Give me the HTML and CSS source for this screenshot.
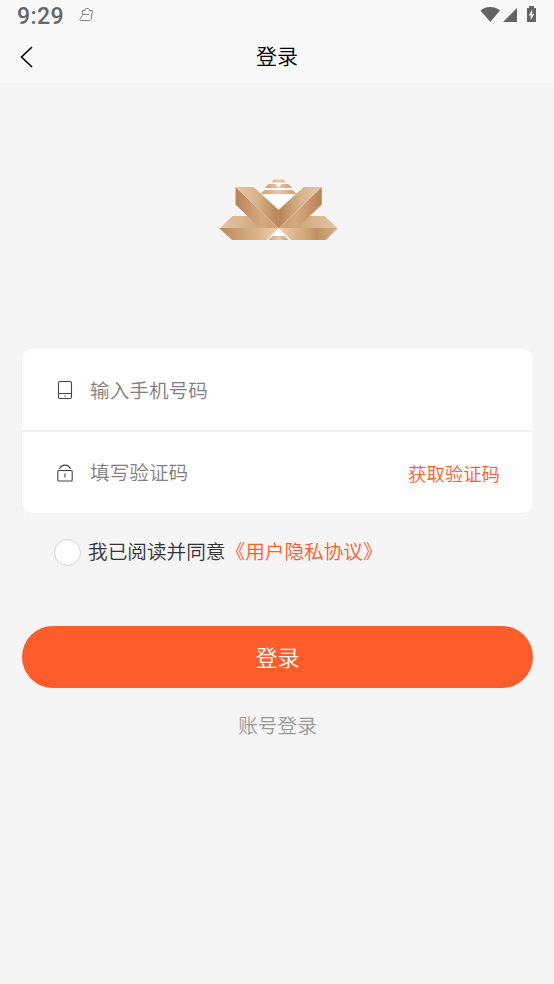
FILE: index.html
```html
<!DOCTYPE html>
<html lang="zh-CN">
<head>
<meta charset="utf-8">
<title>登录</title>
<link rel="stylesheet" href="styles.css">
</head>
<body>
<header class="top">
  <div class="status">
    <span class="clock">9:29</span>
    <svg class="note" width="16" height="16" viewBox="0 0 16 16"><path d="M4.500 3.500H7V2.200L8 1.500h2.500l.8.700v1.300h3.200v2.500l-1 1v5l-1.500 1.500H2.500l-.8-1 2.800-4zM4.500 7.500H11"/></svg>
    <svg class="signals" width="58" height="18" viewBox="0 0 58 18">
      <path d="M1.500 4.500C7-.1 15.500-.1 21 4.500L11.300 16z"/>
      <path d="M24 16h14V2z"/>
      <path fill-rule="evenodd" d="M48 2h2V0h5v2h2v14h-9zM53.200 3.500l-3.500 6h2v4.500l3.500-6h-2z"/>
    </svg>
  </div>
  <div class="nav">
    <svg class="back" width="14" height="22" viewBox="0 0 14 22"><path d="M12 1L1.500 11 12 21"/></svg>
    <h1>登录</h1>
  </div>
</header>
<main>
  <svg class="logo" width="120" height="62" viewBox="218 179 120 62">
    <defs>
      <linearGradient id="arm" gradientUnits="userSpaceOnUse" x1="238" y1="0" x2="279" y2="0"><stop offset="0" stop-color="#e6c5a2"/><stop offset=".45" stop-color="#d9b48d"/><stop offset="1" stop-color="#b58353"/></linearGradient>
      <linearGradient id="fold" gradientUnits="userSpaceOnUse" x1="236" y1="0" x2="270" y2="0"><stop offset="0" stop-color="#b88454"/><stop offset=".75" stop-color="#d5aa80"/><stop offset="1" stop-color="#d0a276"/></linearGradient>
      <linearGradient id="wing" x1="0" x2="1"><stop offset="0" stop-color="#e5c6a5"/><stop offset="1" stop-color="#d0a478"/></linearGradient>
      <linearGradient id="bar" x1="0" x2="1"><stop offset="0" stop-color="#cc9e72"/><stop offset=".5" stop-color="#e7c9aa"/><stop offset="1" stop-color="#cc9e72"/></linearGradient>
      <linearGradient id="base" x1="0" x2="1"><stop offset="0" stop-color="#bd8858"/><stop offset=".6" stop-color="#d9b087"/><stop offset="1" stop-color="#edd0b1"/></linearGradient>
      <linearGradient id="baseRight" x1="0" x2="1"><stop offset="0" stop-color="#edd0b1"/><stop offset=".65" stop-color="#c29163"/><stop offset="1" stop-color="#d9b087"/></linearGradient>
      <g id="half">
        <path fill="url(#wing)" d="M232.500 216h18l12 12.500h-43z"/>
        <path fill="url(#fold)" d="M235.500 187l43 41.500h-18l-25-24z"/>
        <path fill="url(#arm)" d="M235.500 187h18l25.300 23v18.500z"/>
      </g>
    </defs>
    <path fill="#fff" d="M265 195h27l-13.500 15zM278.500 228.500L290 240h-23z"/>
    <use href="#half"/>
    <use href="#half" transform="translate(557.300 0) scale(-1 1)"/>
    <path fill="url(#base)" d="M219 228h59.500L267 240h-35z"/>
    <path fill="url(#baseRight)" d="M278.500 228H338l-12 12h-35z"/>
    <path fill="#fff" d="M273 180h11l12 14h-35z"/>
    <g fill="url(#bar)">
      <path d="M274 179.500h9l3 3h-15zM268.500 184h7l3 3.500 3-3.500h7l3.500 4h-27z"/>
      <path d="M264.500 190h28l4 4h-36z"/>
      <path d="M272.500 236h12l4 4h-20z"/>
    </g>
  </svg>
  <section class="card">
    <div class="row">
      <svg class="field-icon" width="16" height="20" viewBox="0 0 16 20"><rect x="1.500" y="1.500" width="13" height="17" rx="1.500"/><path d="M1.500 13.500h13M7.300 16h1.400"/></svg>
      <span class="hint">输入手机号码</span>
    </div>
    <div class="row">
      <svg class="field-icon" width="16" height="20" viewBox="0 0 16 20"><rect x=".8" y="7.500" width="14.400" height="10.500" rx="1"/><path d="M2.500 6C4.500.8 11.500.8 13.500 6M8 10.500v4"/></svg>
      <span class="hint">填写验证码</span>
      <span class="get-code">获取验证码</span>
    </div>
  </section>
  <div class="agreement"><span class="check"></span><span class="terms">我已阅读并同意<span class="policy">《用户隐私协议》</span></span></div>
  <button class="submit">登录</button>
  <div class="account">账号登录</div>
</main>
</body>
</html>
```
FILE: styles.css
```css
* { box-sizing: border-box; }
body {
  margin: 0;
  min-height: 984px;
  background: #f5f5f5;
  color: #333;
  font-family: "Noto Sans CJK SC", sans-serif;
  font-size: 19.65px;
  font-weight: 350;
}
svg { display: block; flex: none; }
.top { height: 83px; background: #f8f8f8; }
.status { display: flex; align-items: flex-start; height: 32px; padding: 7px 17px 0; }
.clock {
  width: 61px;
  font: 500 23px/20px Roboto, sans-serif;
  letter-spacing: .4px;
  color: #666;
}
.note { fill: none; stroke: #858585; stroke-width: 1; }
.signals { margin: -1px 0 0 auto; fill: #646464; }
.nav { display: flex; align-items: center; height: 50px; padding: 0 20px; }
.back { fill: none; stroke: #000; stroke-width: 1.6; }
h1 { flex: 1; margin: 0 14px 0 0; padding-bottom: 4px; text-align: center; font-size: 21px; font-weight: 350; line-height: 30px; color: #000; }
main { padding: 96px 21px 0 22px; }
.logo { margin: 0 auto 108px 196px; }
.card { height: 164px; overflow: hidden; border-radius: 11px; background: #fff; }
.row { display: flex; align-items: center; height: 81px; padding: 0 33px 0 35px; }
.row + .row { height: 83px; border-top: 2px solid #f2f2f2; }
.field-icon { fill: none; stroke: #444; stroke-width: 1.1; }
.hint { margin-left: 17px; color: #808080; }
.row + .row .hint { padding-bottom: 2px; }
.get-code { margin-left: auto; font-size: 18.4px; color: #ff5c2c; }
.agreement { display: flex; align-items: center; height: 30px; margin-top: 23px; padding-left: 32px; }
.check { width: 27px; height: 27px; margin: 2px 7px 0 0; border: 1.5px solid #d2d2d2; border-radius: 50%; background: #fff; }
.terms { padding-bottom: 2px; }
.policy { color: #ff5c2c; }
.submit {
  display: block;
  width: 100%;
  height: 62px;
  margin: 60px 0 0;
  padding: 0 0 2px;
  border: 0;
  border-radius: 31px;
  background: #ff5c2c;
  color: #fff;
  font: 350 22px/60px "Noto Sans CJK SC", sans-serif;
}
.account { margin-top: 22px; text-align: center; line-height: 30px; color: #999; }
```
